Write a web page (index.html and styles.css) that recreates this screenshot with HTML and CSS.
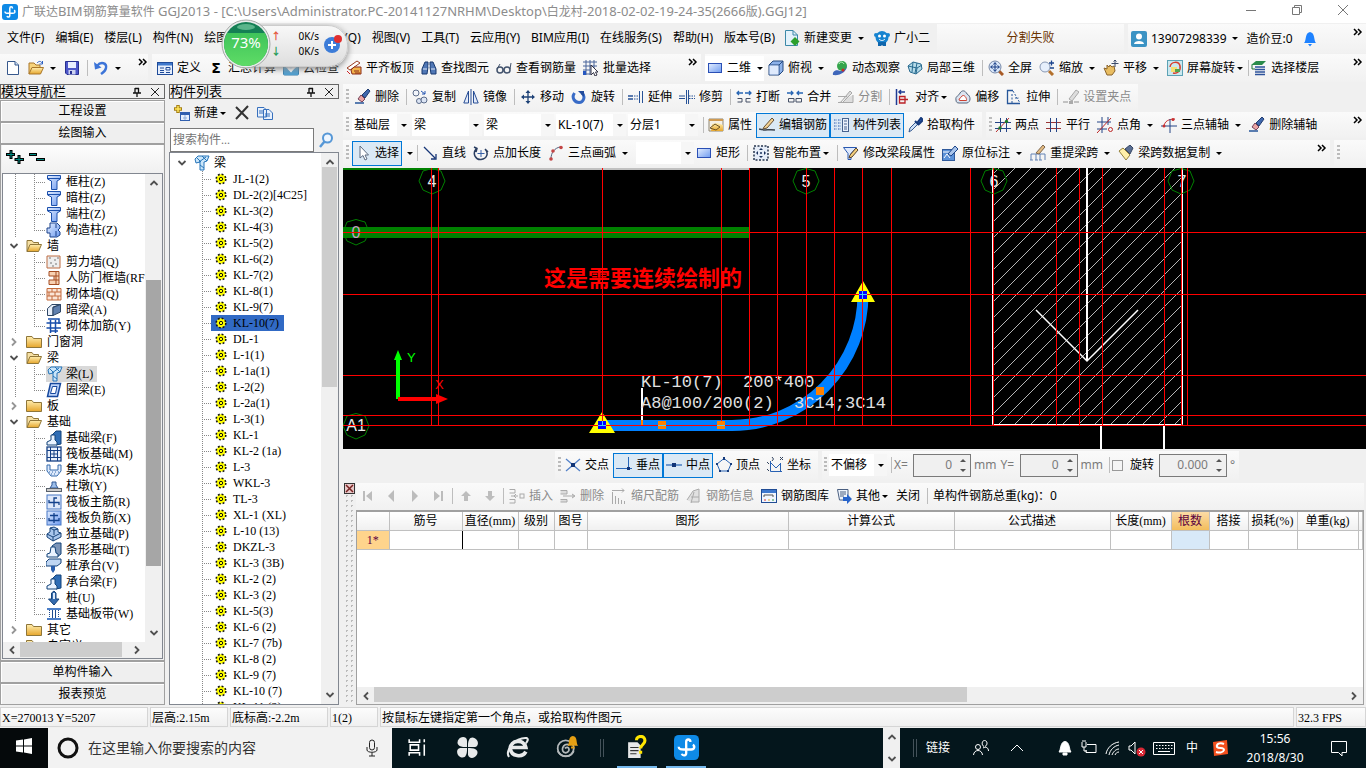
FILE: index.html
```html
<!DOCTYPE html>
<html lang="zh-CN">
<head>
<meta charset="utf-8">
<title>广联达BIM钢筋算量软件 GGJ2013</title>
<link rel="stylesheet" href="styles.css">
</head>
<body>
<svg class="defs" aria-hidden="true">
<defs>
<linearGradient id="gBlue" x1="0" y1="0" x2="1" y2="1"><stop offset="0" stop-color="#e4eeff"/><stop offset="1" stop-color="#6e9bf0"/></linearGradient>
<linearGradient id="gGold" x1="0" y1="0" x2="0" y2="1"><stop offset="0" stop-color="#ffeeb0"/><stop offset="1" stop-color="#e6a62c"/></linearGradient>
<linearGradient id="gGreen" x1="0" y1="0" x2="0" y2="1"><stop offset="0" stop-color="#3fc45a"/><stop offset="1" stop-color="#5fdc66"/></linearGradient>
</defs>
<symbol id="logo" viewBox="0 0 16 16"><rect width="16" height="16" rx="3" fill="#0e8ae6"/><path d="M10.500 4.500C10.500 2.300 7.800 2.300 7.800 4.500V11.500C7.800 13.500 5.500 13.500 5 12M3 7.500C3 9.500 5 9.300 7 9.300H11C13.300 9.300 13.500 7 12 6.300" fill="none" stroke="#fff" stroke-width="1.500"/></symbol>
<symbol id="new" viewBox="0 0 16 16"><path d="M2.500 1.500H10L13.500 5V14.500H2.500Z" fill="#fff" stroke="#37588c"/><path d="M10 1.500V5H13.500" fill="#cfe0f5" stroke="#37588c"/></symbol>
<symbol id="open" viewBox="0 0 16 16"><path d="M1 14V3H6L8 5H12V7" fill="#f6d37c" stroke="#a9772a"/><path d="M1 14L4 7.500H15.500L12.500 14Z" fill="url(#gGold)" stroke="#a9772a"/><path d="M9 3C11 .8 13 1 14 3M14.500 1V4H11.500" fill="none" stroke="#2b5fc0"/></symbol>
<symbol id="openf" viewBox="0 0 16 16"><path d="M1 13.500V2.500H6L7.500 4.500H12.500V7" fill="#f6e0a4" stroke="#8f7639"/><path d="M1 13.500L4 6.500H15.500L12.500 13.500Z" fill="url(#gGold)" stroke="#8f7639"/></symbol>
<symbol id="save" viewBox="0 0 16 16"><path d="M1.500 1.500H14.500V14.500H3L1.500 13Z" fill="#4d56c8" stroke="#272f90"/><rect x="4" y="2" width="8" height="6" fill="#e9eeff"/><rect x="4.500" y="10" width="7" height="4.500" fill="#cdd3f0"/><rect x="6" y="11" width="2" height="3" fill="#272f90"/></symbol>
<symbol id="undo" viewBox="0 0 16 16"><path d="M4 6C8 1 14 3 13 8C12.600 11 10 12.500 8 14" fill="none" stroke="#3c74d8" stroke-width="2.400"/><path d="M1 2L2 9.500L8.500 7.500Z" fill="#3c74d8"/></symbol>
<symbol id="define" viewBox="0 0 16 16"><rect x=".5" y="2.500" width="15" height="12" fill="#e6eefb" stroke="#1f4b99"/><rect x="1" y="3" width="14" height="2.500" fill="#3f78cc"/><path d="M3 8H7M3 10.500H7M3 12.500H7M9 7.500H13V10H9ZM9 12.500H13" stroke="#1f4b99" fill="none"/></symbol>
<symbol id="cloud" viewBox="0 0 16 16"><rect x=".5" y="2" width="15" height="13" rx="1" fill="#d9ecfb" stroke="#367fae"/><path d="M1 6L8 11L15 6V15H1Z" fill="#4f9fd0"/><path d="M5 8L8 11L13 5" stroke="#fff" stroke-width="2" fill="none"/></symbol>
<symbol id="align" viewBox="0 0 16 16"><path d="M1 8L11 1L14 3L4 10Z" fill="#fff" stroke="#9a3d22"/><path d="M5 10L8 7H15V14H6Z" fill="#f2b34c" stroke="#8b2a17"/><path d="M8 11H13M9 13H14" stroke="#8b2a17"/><path d="M1 11L4 14" stroke="#c22"/></symbol>
<symbol id="find" viewBox="0 0 16 16"><path d="M4 2H7V7L6 14H1V9ZM12 2H9V7L10 14H15V9Z" fill="#5077b5" stroke="#18396f"/><path d="M2 9H6M10 9H14M7 6H9" stroke="#e1ebfa"/></symbol>
<symbol id="glasses" viewBox="0 0 16 16"><circle cx="4" cy="10" r="3" fill="none" stroke="#43536d" stroke-width="1.500"/><circle cx="11" cy="10" r="3" fill="none" stroke="#43536d" stroke-width="1.500"/><path d="M7 10H8M1 9L4 4M14 9L15 3" stroke="#43536d"/></symbol>
<symbol id="batch" viewBox="0 0 16 16"><path d="M0 2H14M0 6H14M0 10H7M3 0V15M7 0V15M11 0V8M0 14H7" stroke="#48659a"/><path d="M8 5V15L10.500 12.500L12 16L14 15L12.500 12H15Z" fill="#fff" stroke="#334"/><rect x="0" y="11" width="3" height="4" fill="#2456c0"/></symbol>
<symbol id="rect" viewBox="0 0 16 16"><rect x="1.500" y="3.500" width="13" height="9" fill="url(#gBlue)" stroke="#2a4fb5"/></symbol>
<symbol id="cube" viewBox="0 0 16 16"><path d="M1 5L5 1H15V11L11 15H1Z" fill="#8db2ea" stroke="#24497e"/><path d="M1 5H11V15M11 5L15 1" fill="none" stroke="#24497e"/><rect x="1.500" y="5.500" width="9" height="9" fill="#dfeafc"/></symbol>
<symbol id="orbit" viewBox="0 0 16 16"><circle cx="10" cy="6" r="5" fill="#35a54c"/><path d="M7 4C8 1 11 2 12 4" stroke="#c8f7c9" fill="none"/><path d="M1 15C0 11 5 9 8 11C12 11 14 9 15 5C15 12 8 16 1 15Z" fill="#3e66ba"/><circle cx="11" cy="10" r="1.500" fill="#ce2727"/></symbol>
<symbol id="part3d" viewBox="0 0 16 16"><path d="M1 6L6 2L14 4L15 9L9 14L3 12Z" fill="#b6dbe9" stroke="#286a8f"/><path d="M6 2L5 12M10 3L8 13M1 6L10 8L15 5M10 8L9 14" stroke="#286a8f" fill="none"/></symbol>
<symbol id="full" viewBox="0 0 16 16"><path d="M11 11L15 15" stroke="#a85a25" stroke-width="3"/><circle cx="7" cy="7" r="6" fill="#dbe8fa" stroke="#7688a8"/><path d="M7 3V11M3 7H11M5.500 4.500L7 2.500L8.500 4.500M5.500 9.500L7 11.500L8.500 9.500M4.500 5.500L2.500 7L4.500 8.500M9.500 5.500L11.500 7L9.500 8.500" stroke="#143a83" fill="none"/></symbol>
<symbol id="zoom" viewBox="0 0 16 16"><path d="M10 11L14 15" stroke="#b3702c" stroke-width="3"/><circle cx="6" cy="7" r="5" fill="#e6effc" stroke="#8798b4"/><path d="M10 3H15M12.500 .5V5.500M11 8H15" stroke="#1b448d" stroke-width="1.300"/></symbol>
<symbol id="pan" viewBox="0 0 16 16"><path d="M1 8L4 9V5L6 7L7 5L9 7L11 6L12 11L9 15H4Z" fill="#e9bd61" stroke="#8a632a"/><path d="M12 0V7M8.500 3.500H15.500M10.500 1.500L12 0L13.500 1.500" stroke="#3a4a69" fill="none"/></symbol>
<symbol id="spin" viewBox="0 0 16 16"><rect x=".5" y=".5" width="15" height="15" fill="#cbe8ef" stroke="#5ca2b5"/><path d="M3 7C4 1 12 1 13 6C14 11 10 14 6 13" fill="none" stroke="#d93e2c" stroke-width="1.500"/><rect x="4" y="7" width="6" height="5" fill="#f7df72"/><rect x="8" y="9" width="5" height="3" fill="#53a34e"/></symbol>
<symbol id="floor" viewBox="0 0 16 16"><path d="M0 5L5 1H15L11 5Z" fill="#2a8b4b"/><path d="M4 7H14M4 9.500H14M4 12H14M4 14.500H14" stroke="#2c529b" stroke-width="1.500"/><path d="M1 5V9H4" stroke="#1d6e35" fill="none"/></symbol>
<symbol id="change" viewBox="0 0 16 16"><path d="M1.500 .5H9L13.500 5V15.500H1.500Z" fill="#e3f2fb" stroke="#3c89a8"/><path d="M11 7L15.500 11.500L11 16L6.500 11.500Z" fill="#2da02c"/><path d="M9 .5V5H13.500" fill="none" stroke="#3c89a8"/></symbol>
<symbol id="mascot" viewBox="0 0 16 16"><circle cx="8" cy="7.500" r="6.500" fill="#1784d0"/><circle cx="2" cy="5" r="2" fill="#1784d0"/><circle cx="14" cy="5" r="2" fill="#1784d0"/><path d="M4 12H12L12 16H9L8 15L7 16H4Z" fill="#0f66ac"/><circle cx="5.500" cy="6" r="1.500" fill="#fff"/><circle cx="10.500" cy="6" r="1.500" fill="#fff"/><path d="M5 9C7 11 9 11 11 9" stroke="#fff" fill="none"/></symbol>
<symbol id="user" viewBox="0 0 16 16"><rect width="16" height="16" rx="2" fill="#3b93c4"/><circle cx="8" cy="5.500" r="3" fill="#fff"/><path d="M3 13C3 9 13 9 13 13Z" fill="#fff"/></symbol>
<symbol id="bell" viewBox="0 0 16 16"><path d="M2 12C4.500 10 2.500 2 8 1C13.500 2 11.500 10 14 12ZM6 13H10L8 15.500Z" fill="#1e82ff"/></symbol>
<symbol id="erase" viewBox="0 0 16 16"><path d="M0 14H9" stroke="#26569a" stroke-width="1.500"/><path d="M3 10L6 6L10 10L7 13Z" fill="#eaa4a4" stroke="#74435a"/><path d="M7 6L13 0L15 2L10 9Z" fill="#3f68ad" stroke="#223d70"/></symbol>
<symbol id="copy" viewBox="0 0 16 16"><circle cx="4" cy="4" r="3" fill="#f2f5fb" stroke="#5c6c8a"/><circle cx="7" cy="12" r="2.500" fill="#dce5f5" stroke="#5c6c8a"/><circle cx="12" cy="11" r="3" fill="#dce5f5" stroke="#5c6c8a"/><path d="M9 2L13 5M13 2V5H10" stroke="#2455b1" fill="none"/></symbol>
<symbol id="mirror" viewBox="0 0 16 16"><path d="M5.500 2V14H.8ZM10.500 2V14H15.200Z" fill="#e3ebfa" stroke="#294e95"/><path d="M8 0V16" stroke="#294e95"/></symbol>
<symbol id="move" viewBox="0 0 16 16"><path d="M8 2V14M2 8H14" stroke="#1e4277" stroke-width="1.300"/><path d="M8 1L10.500 4H5.500ZM8 15L5.500 12H10.500ZM1 8L4 5.500V10.500ZM15 8L12 10.500V5.500Z" fill="#1e4277"/></symbol>
<symbol id="rotate" viewBox="0 0 16 16"><path d="M3.500 4C0 9 4 13.500 8 13.500C13 13.500 14.500 7 11 4" fill="none" stroke="#386bc7" stroke-width="3"/><path d="M7 2H13V8Z" fill="#234c9c"/></symbol>
<symbol id="extend" viewBox="0 0 16 16"><path d="M0 7H5M0 10H5" stroke="#275297" stroke-width="1.500"/><path d="M6 7H11M6 10H11" stroke="#275297" stroke-dasharray="1.500 1"/><path d="M11.500 2V14M14.500 2V14" stroke="#275297"/></symbol>
<symbol id="trim" viewBox="0 0 16 16"><path d="M0 7H6M0 9.500H6M7.500 1V15M9.500 1V15" stroke="#275297"/><path d="M10 7H16M10 9.500H16" stroke="#275297" stroke-dasharray="1.500 1"/></symbol>
<symbol id="break" viewBox="0 0 16 16"><path d="M1 4H7M3 2L1 4L3 6M9 4H15M13 2L15 4L13 6" stroke="#2765b4" fill="none" stroke-width="1.300"/><path d="M1.500 9.500H6V13H1.500M14.500 9.500H10V13H14.500" stroke="#444f65" fill="none"/></symbol>
<symbol id="join" viewBox="0 0 16 16"><path d="M0 4H6M4 2L6 4L4 6M16 4H10M12 2L10 4L12 6" stroke="#2765b4" fill="none" stroke-width="1.300"/><path d="M1.500 9.500H7V13H1.500ZM14.500 9.500H9V13H14.500Z" stroke="#444f65" fill="none"/></symbol>
<symbol id="split" viewBox="0 0 16 16"><path d="M0 7.500H9M0 13.500H15V6M3 13L12 2L14 4L5 13" stroke="#a9a9a9" fill="#ddd"/></symbol>
<symbol id="alignto" viewBox="0 0 16 16"><path d="M1.500 0V16" stroke="#1d3a94" stroke-width="1.500"/><path d="M4 3H10M6 1L4 3L6 5" stroke="#1d3a94" fill="none" stroke-width="1.500"/><path d="M4.500 7.500H10V14H4.500ZM4 10.500H13" stroke="#bb2026" fill="none" stroke-width="1.300"/></symbol>
<symbol id="offset" viewBox="0 0 16 16"><path d="M1 11C0 7 4 7 5 4C7 1 10 1 12 5C16 7 16 13 12 14H4C2 14 1 13 1 11Z" fill="#dce4f0" stroke="#55677f"/><path d="M4 11C4 9 6 9 7 7C9 5 12 9 11.500 11.500H5Z" fill="#fff" stroke="#cc4030"/></symbol>
<symbol id="stretch" viewBox="0 0 16 16"><path d="M7 1.500H1.500V14.500H14" fill="none" stroke="#26569a" stroke-width="1.300"/><path d="M7 2L14 14M6 5V14M9 9H13" stroke="#26569a" stroke-dasharray="2 1.500"/></symbol>
<symbol id="grip" viewBox="0 0 16 16"><path d="M0 13H5M11 13H16" stroke="#b1b1b1" stroke-width="1.500"/><path d="M6 10L13 1L16 3L9 12Z" fill="#ddd" stroke="#a8a8a8"/><rect x="6" y="12" width="4" height="3" fill="#aaa"/></symbol>
<symbol id="props" viewBox="0 0 16 16"><path d="M1 2H15V14H1Z" fill="#f5f0e6" stroke="#8f8672"/><path d="M1 2H15V4H1Z" fill="#cf9a52"/><path d="M4 7L9 6L15 8V14H3Z" fill="url(#gGold)"/><path d="M2 11L7 7L12 10L8 13Z" fill="none" stroke="#6d5327"/></symbol>
<symbol id="pencil" viewBox="0 0 16 16"><path d="M0 12C5 14 10 12 16 13" stroke="#3b434e" fill="none" stroke-width="1.500"/><path d="M5 10L13 1L15 3L8 11L4 12Z" fill="#f1d194" stroke="#665035"/></symbol>
<symbol id="list" viewBox="0 0 16 16"><path d="M1 3H4M1 6H4M1 9H4M1 12H4M5 3H8M5 6H8M5 9H8M5 12H8" stroke="#295aae" stroke-dasharray="1.500 1"/><rect x="9.500" y="1.500" width="6" height="13" fill="#eaf1fc" stroke="#46638f"/><path d="M11 4H14M11 7H14M11 10H14M11 12H14" stroke="#46638f"/></symbol>
<symbol id="pick" viewBox="0 0 16 16"><path d="M2 15L3 11L9 5L11 7L5 13Z" fill="#cfe1f8" stroke="#355990"/><path d="M8 4L12 8M10 6L14 1L16 3L12 7Z" stroke="#173b7d" stroke-width="2" fill="#2c5fb8"/></symbol>
<symbol id="twopt" viewBox="0 0 16 16"><path d="M0 5.500H16M0 11.500H16M5.500 1V15M11.500 1V15" stroke="#244486"/><path d="M1 15L14 1" stroke="#b83030"/><circle cx="5" cy="11" r="1.700" fill="#1d7a2a"/><circle cx="11.500" cy="4.500" r="1.700" fill="#1d7a2a"/></symbol>
<symbol id="parallel" viewBox="0 0 16 16"><path d="M0 5.500H15M0 11.500H15" stroke="#993535"/><path d="M4.500 1V15M10.500 1V15" stroke="#244486"/></symbol>
<symbol id="ptangle" viewBox="0 0 16 16"><path d="M0 5H14M0 12H10M5 0V16M11 0V8" stroke="#244486"/><path d="M0 16L14 1" stroke="#bd2727"/><circle cx="13.500" cy="12.500" r="2" fill="none" stroke="#bd2727"/></symbol>
<symbol id="axis3" viewBox="0 0 16 16"><path d="M3 10C3 4 8 2 14 2" stroke="#c83131" fill="none"/><path d="M0 9H16M9 2V16" stroke="#244486"/><circle cx="3" cy="9" r="1.500" fill="#c83131"/><circle cx="12" cy="2.500" r="1.500" fill="#c83131"/></symbol>
<symbol id="cursor" viewBox="0 0 16 16"><path d="M5 1V13L8 10.500L10 15L12 14L10 10H13.500Z" fill="#fff" stroke="#5d6b80"/></symbol>
<symbol id="line" viewBox="0 0 16 16"><path d="M2 2L13 13M14 9V14H9" stroke="#173677" stroke-width="1.300" fill="none"/></symbol>
<symbol id="ptlen" viewBox="0 0 16 16"><path d="M3 4C-1 9 3 15 8 14.500C14 14 16 8 12 4M1 2L4 3.500L3 7M15 7L12 4" fill="none" stroke="#2a3e61" stroke-width="1.500"/><path d="M8 5V12M4.500 8.500H11.500" stroke="#355fa7"/></symbol>
<symbol id="arc" viewBox="0 0 16 16"><path d="M3 14C3 7 7 3 12 2" stroke="#50607b" fill="none"/><circle cx="3" cy="14" r="1.800" fill="#c34545"/><circle cx="5" cy="6" r="1.800" fill="#c34545"/><circle cx="13" cy="2.500" r="1.800" fill="#c34545"/></symbol>
<symbol id="smart" viewBox="0 0 16 16"><rect x="1" y="1" width="14" height="14" fill="#e6edf8" stroke="#26354e" stroke-width="1.500" stroke-dasharray="2 1.500"/><path d="M8 3L10 5H6ZM8 13L6 11H10ZM3 8L5 6V10ZM13 8L11 10V6Z" fill="#1a315c"/><circle cx="8" cy="8" r="1" fill="#1a315c"/></symbol>
<symbol id="beamedit" viewBox="0 0 16 16"><path d="M.5 2.500H13.500L8 8.500V14.500H5V8.500Z" fill="#dfeafd" stroke="#2858b0"/><path d="M7 10L13 3L15 5L9 12L6 13Z" fill="#f3cf7d" stroke="#59442c"/></symbol>
<symbol id="mark" viewBox="0 0 16 16"><rect x=".5" y="4.500" width="12" height="11" fill="#5c92d8" stroke="#305a9b"/><path d="M2 13L5 9L8 13M1 7H9" stroke="#fff" fill="none"/><path d="M6 9L13 1L16 4L9 11Z" fill="#a8c4ea" stroke="#1a4389"/></symbol>
<symbol id="respan" viewBox="0 0 16 16"><path d="M1 15V9H15V15M6 9V15M10 9V15M0 15H3M5 15H8M9 15H12" stroke="#6382b4" fill="none"/><path d="M6 8L13 0L15 2L9 9Z" fill="#e3bb82" stroke="#7c654c"/></symbol>
<symbol id="brush" viewBox="0 0 16 16"><path d="M1 6L5 3L12 10L8 15Z" fill="#fff0aa" stroke="#94823f"/><path d="M7 4L12 0L15 3L12 9Z" fill="#5b6f93" stroke="#354563"/></symbol>
<symbol id="sx" viewBox="0 0 16 16"><path d="M1 2L15 14M15 2L1 14" stroke="#5482c8" stroke-width="1.300"/><rect x="6" y="6" width="4" height="4" fill="#123578"/></symbol>
<symbol id="perp" viewBox="0 0 16 16"><path d="M0 11.500H16M12.500 0V12" stroke="#2867b9"/><rect x="11" y="10" width="3" height="3" fill="#123578"/></symbol>
<symbol id="mid" viewBox="0 0 16 16"><path d="M0 8H16" stroke="#6c97cd" stroke-width="2"/><rect x="6" y="6" width="4" height="4" fill="#123578"/></symbol>
<symbol id="penta" viewBox="0 0 16 16"><path d="M8 1.500L15 7L12 14H4L1 7Z" fill="none" stroke="#2b65b4"/><path d="M7 0H9V3H7ZM0 6H2V8H0ZM14 6H16V8H14ZM3 13H5V15H3ZM11 13H13V15H11Z" fill="#173c7c"/></symbol>
<symbol id="coord" viewBox="0 0 16 16"><path d="M3.500 4V14.500H15M4 6L9 11L14 6M13.500 6V14" stroke="#2861b3" fill="none"/><path d="M5 0L6.500 2L5 4M13 0L16 3M16 0L13 3M0 5L2 7M0 12L2 14" stroke="#33445f" fill="none"/></symbol>
<symbol id="first" viewBox="0 0 16 16"><path d="M4 3H6V13H4ZM13 3V13L7 8Z" fill="#bcbcbc"/></symbol>
<symbol id="prev" viewBox="0 0 16 16"><path d="M11 2V14L5 8Z" fill="#bcbcbc"/></symbol>
<symbol id="next" viewBox="0 0 16 16"><path d="M5 2V14L11 8Z" fill="#bcbcbc"/></symbol>
<symbol id="last" viewBox="0 0 16 16"><path d="M12 3H10V13H12ZM3 3V13L9 8Z" fill="#bcbcbc"/></symbol>
<symbol id="up" viewBox="0 0 16 16"><path d="M8 3L13 8H10V13H6V8H3Z" fill="#bdbdbd"/></symbol>
<symbol id="down" viewBox="0 0 16 16"><path d="M8 13L13 8H10V3H6V8H3Z" fill="#bdbdbd"/></symbol>
<symbol id="insrow" viewBox="0 0 16 16"><path d="M.5 1.500H6V5H.5M.5 11.500H6V15H.5M2 8H9M7 6L5 8L7 10" fill="none" stroke="#aaa"/><rect x="11" y="6" width="4" height="4" fill="none" stroke="#aaa"/></symbol>
<symbol id="delrow" viewBox="0 0 16 16"><path d="M.5 2.500H7V6H.5M.5 11.500H7V14H.5M3 8H14M12 6L15 8L12 10" fill="#ddd" stroke="#aaa"/></symbol>
<symbol id="scalebar" viewBox="0 0 16 16"><path d="M1 2.500H13M11 .5L13 2.500L11 4.500M1.500 4V16M4.500 8V16M7.500 10V16M10.500 12V16M13.500 13V16" stroke="#aaa" fill="none"/></symbol>
<symbol id="info" viewBox="0 0 16 16"><path d="M1 12L7 3L13 1V14H5M5 9H13M8 4L5 15" stroke="#aaa" fill="#e1e1e1"/></symbol>
<symbol id="gallery" viewBox="0 0 16 16"><rect x=".5" y="1.500" width="15" height="13" fill="#f1f6ff" stroke="#204c94"/><rect x="1" y="2" width="14" height="3" fill="#3d78cf"/><path d="M3 9V7H12V9" fill="none" stroke="#555"/><path d="M3 12H5" stroke="#d33"/><path d="M7 12H9" stroke="#e8a81c"/><path d="M11 12H13" stroke="#289b3c"/></symbol>
<symbol id="other" viewBox="0 0 16 16"><path d="M1.500 1.500H12V12H3.500ZM4 4H10M4 6H10M4 8H8" fill="#edf3fc" stroke="#4a5f80"/><path d="M7 9H11V6L16 11L11 16V13H7Z" fill="#2663cb"/></symbol>
<symbol id="addcomp" viewBox="0 0 16 16"><rect x="6.500" y="7.500" width="9" height="8" fill="#e8f0fc" stroke="#315fae"/><path d="M7 9H15" stroke="#315fae" stroke-width="2"/><path d="M9 13H13M11 10V15" stroke="#8cadd9"/><path d="M4 0V8M0 4H8" stroke="#a68014" stroke-width="3.500"/><path d="M4 1V7M1 4H7" stroke="#ffe65b" stroke-width="1.500"/></symbol>
<symbol id="cross" viewBox="0 0 16 16"><path d="M2 2L14 14M14 1L2 14" stroke="#333" stroke-width="2"/></symbol>
<symbol id="pages" viewBox="0 0 16 16"><path d="M.5 2.500H7L9.500 5V12H.5ZM6.500 4.500H12L15.500 8V14.500H6.500Z" fill="#e7f0fc" stroke="#3770bd"/><path d="M2 6H6M2 8H6M8 9H13M8 11H13" stroke="#3770bd"/></symbol>
<symbol id="search" viewBox="0 0 16 16"><circle cx="9.500" cy="6" r="4.500" fill="#eef6ff" stroke="#5697d6" stroke-width="2"/><path d="M6.500 9.500L2 15" stroke="#5697d6" stroke-width="2.500"/></symbol>
<symbol id="folder" viewBox="0 0 16 16"><path d="M.5 13.500V2.500H6L7.500 4.500H15.500V13.500Z" fill="url(#gGold)" stroke="#8f7639"/></symbol>
<symbol id="col" viewBox="0 0 16 16"><path d="M1.500 1.500H14.500V5L11 7V15.500H5.500V7L1.500 5Z" fill="url(#gBlue)" stroke="#1c50ac"/><path d="M2 4.500H14" stroke="#1c50ac"/></symbol>
<symbol id="colc" viewBox="0 0 16 16"><path d="M4 1H11L14 4V6L12 8L14 10V13L11 15H4V11H1V6H4Z" fill="url(#gBlue)" stroke="#1c438a"/><path d="M10 2V6M10 9V14" stroke="#1c438a"/></symbol>
<symbol id="wall" viewBox="0 0 16 16"><path d="M1 2H14V14H1Z" fill="#eee" stroke="#bd6d42"/><path d="M3 4H5M8 6H10M4 9H6M9 10H11M6 12H8M11 4H13" stroke="#777"/></symbol>
<symbol id="door" viewBox="0 0 16 16"><path d="M3 1.500H13V14.500H3V10H8V6H3Z" fill="#f8d1b2" stroke="#a44d23"/><path d="M10 1V14M8 6H13M8 10H13" stroke="#a44d23"/></symbol>
<symbol id="brick" viewBox="0 0 16 16"><path d="M1 2.500H15V14H1Z" fill="#fbe5d7" stroke="#c36b3c"/><path d="M1 6H15M1 10H15M6 2V6M11 2V6M3 6V10M9 6V10M6 10V14M12 10V14" stroke="#c36b3c"/></symbol>
<symbol id="hbeam" viewBox="0 0 16 16"><path d="M1.500 6.500L6 2.500H14.500L7 5V13.500H1.500Z" fill="#e8effa" stroke="#2c4565"/><path d="M7 5.500L14.500 2.500V10L7 13.500Z" fill="#5f7fae" stroke="#2c4565"/></symbol>
<symbol id="rebar" viewBox="0 0 16 16"><path d="M.5 5H15M.5 10H15M4.500 2V15M9.500 2V15M2 1H13V6M4 13H12" fill="none" stroke="#174dab" stroke-width="1.500"/></symbol>
<symbol id="beam" viewBox="0 0 16 16"><path d="M1 4L4 1H15L13 6L10 7V15H6V7L2 8Z" fill="#cbe6fa" stroke="#2675b9"/><path d="M3 3L7 7M8 1L13 6M5 7L12 2M6 10L10 13" stroke="#2675b9"/></symbol>
<symbol id="ring" viewBox="0 0 16 16"><path d="M4.500 1.500H14.500L11.500 14.500H1.500Z" fill="#bdd4fa" stroke="#16489d" stroke-width="1.500"/><path d="M6.500 4.500H11L9.500 11.500H4.500Z" fill="#fff" stroke="#16489d"/></symbol>
<symbol id="fbeam" viewBox="0 0 16 16"><path d="M5 6L10 1H15V14L10 15Z" fill="#2f6db5" stroke="#134378"/><path d="M1 15V12L5 10V5H9V10L11 12V15Z" fill="#eaf3ff" stroke="#134378"/></symbol>
<symbol id="stripf" viewBox="0 0 16 16"><path d="M6 4L10 1H15V12L11 15Z" fill="#7c95b8" stroke="#134378"/><path d="M1 15V12L4 11L5 5H9L10 11L12 12V15Z" fill="#eaf3ff" stroke="#134378"/></symbol>
<symbol id="raft" viewBox="0 0 16 16"><rect x="1" y="1" width="14" height="14" fill="#eaf1fc" stroke="#154085" stroke-width="1.300"/><path d="M1 4.500H15M1 11.500H15M4.500 1V15M11.500 1V15M4 8H12M8 4V12" stroke="#154085"/></symbol>
<symbol id="pit" viewBox="0 0 16 16"><path d="M1 3H4V8H12V3H15V9L11 14H5L1 9Z" fill="#deeafc" stroke="#346aac"/><path d="M3 10H13M5 12H11" stroke="#346aac" stroke-dasharray="1 2"/></symbol>
<symbol id="pier" viewBox="0 0 16 16"><path d="M4 10L6 7V4H10V7L12 10Z" fill="#9cbeea" stroke="#315894"/><rect x=".5" y="10.500" width="15" height="3" fill="#ccc" stroke="#59616b"/></symbol>
<symbol id="mainbar" viewBox="0 0 16 16"><rect x="1" y="1" width="14" height="14" fill="#dfe9fb" stroke="#4677c4"/><path d="M3 6V8.500H13V11M8 13V4H11" stroke="#12418c" fill="none" stroke-width="1.300"/></symbol>
<symbol id="negbar" viewBox="0 0 16 16"><rect x="1" y="1" width="14" height="14" fill="url(#gBlue)" stroke="#4677c4"/><path d="M8 3V13M4 5.500H12M3 8V10.500H13V8" stroke="#12418c" fill="none" stroke-width="1.300"/></symbol>
<symbol id="found" viewBox="0 0 16 16"><path d="M1 8L4 6V2L8 1L12 3V6L15 7V11L7 15L1 11Z" fill="#a9c7ed" stroke="#174379"/><path d="M1 8L7 11L15 7M7 11V15M4 2L8 4L12 3M8 4V9" stroke="#174379" fill="none"/></symbol>
<symbol id="pile" viewBox="0 0 16 16"><path d="M0 4L3 1H15V5L11 8H0Z" fill="#bfd6f3" stroke="#174379"/><path d="M5 8H9V12L7 15L5 12Z" fill="#2a5fae"/></symbol>
<symbol id="pile2" viewBox="0 0 16 16"><path d="M5.500 3L8 1L10 3V9H13L8 15L2.500 9H5.500Z" fill="#356bae" stroke="#174379"/><path d="M7 3H9V9H7Z" fill="#deebfa"/></symbol>
<symbol id="strip" viewBox="0 0 16 16"><path d="M1 3H15M1 13H15" stroke="#4c7fc8" stroke-width="2"/><path d="M3.500 4V12M12.500 4V12" stroke="#204d90" stroke-dasharray="1 1"/><path d="M6.500 4V12M9.500 4V12" stroke="#204d90"/></symbol>
<symbol id="gear" viewBox="0 0 12 12"><circle cx="6" cy="6" r="4" fill="#ff0" stroke="#ff0" stroke-width="1.500"/><circle cx="6" cy="6" r="4.800" fill="none" stroke="#111" stroke-width="1.600" stroke-dasharray="1.900 1.870"/><circle cx="6" cy="6" r="1.700" fill="#ff0" stroke="#111"/></symbol>
<symbol id="pin" viewBox="0 0 10 10"><path d="M3 1V6M6.500 1V6M3 1.500H7M1 6H9M5 6V10" stroke="#111" fill="none" stroke-width="1.300"/></symbol>
<symbol id="close" viewBox="0 0 10 10"><path d="M1 1L9 9M9 1L1 9" stroke="#222" fill="none"/></symbol>
<symbol id="aup" viewBox="0 0 10 10"><path d="M1.500 7L5 3.500L8.500 7" fill="none" stroke="#505050" stroke-width="1.800"/></symbol>
<symbol id="adown" viewBox="0 0 10 10"><path d="M1.500 3L5 6.500L8.500 3" fill="none" stroke="#505050" stroke-width="1.800"/></symbol>
<symbol id="aleft" viewBox="0 0 10 10"><path d="M7 1.500L3.500 5L7 8.500" fill="none" stroke="#505050" stroke-width="1.800"/></symbol>
<symbol id="aright" viewBox="0 0 10 10"><path d="M3 1.500L6.500 5L3 8.500" fill="none" stroke="#505050" stroke-width="1.800"/></symbol>
<symbol id="more" viewBox="0 0 10 10"><path d="M1 2L4 5L1 8M5 2L8 5L5 8" fill="none" stroke="#000" stroke-width="1.500"/></symbol>
</svg>

<header class="titlebar">
  <svg class="ic"><use href="#logo"/></svg>
  <h1><span>广联达</span>BIM<span>钢筋算量软件</span> GGJ2013 - [C:\Users\Administrator.PC-20141127NRHM\Desktop\<span>白龙村</span>-2018-02-02-19-24-35(2666<span>版</span>).GGJ12]</h1>
  <div class="winbtns">
    <button aria-label="最小化"><svg viewBox="0 0 12 12"><path d="M1 6.500H11" stroke="#777"/></svg></button>
    <button aria-label="还原"><svg viewBox="0 0 12 12"><path d="M1.500 3.500H8.500V10.500H1.500ZM3.500 3V1.500H10.500V8.500H9" fill="none" stroke="#777"/></svg></button>
    <button aria-label="关闭"><svg viewBox="0 0 12 12"><path d="M1 1L11 11M11 1L1 11" stroke="#777"/></svg></button>
  </div>
</header>

<div class="menubar">
  <nav class="menus">
    <button>文件(F)</button><button>编辑(E)</button><button>楼层(L)</button><button>构件(N)</button><button>绘图(D)</button><button>修改(M)</button><button>钢筋量(Q)</button><button>视图(V)</button><button>工具(T)</button><button>云应用(Y)</button><button>BIM应用(I)</button><button>在线服务(S)</button><button>帮助(H)</button><button>版本号(B)</button>
    <button class="tool"><svg class="ic"><use href="#change"/></svg>新建变更<i class="caret"></i></button>
    <button class="tool"><svg class="ic"><use href="#mascot"/></svg>广小二</button>
  </nav>
  <div class="strip notice">分割失败</div>
  <div class="strip account">
    <button class="tool"><svg class="ic"><use href="#user"/></svg>13907298339<i class="caret"></i></button>
    <button class="tool">造价豆:0</button>
    <button class="tool bell" aria-label="通知"><svg class="ic"><use href="#bell"/></svg></button>
    <svg class="more"><use href="#more"/></svg>
  </div>
</div>

<div class="mainbar">
  <div class="strip files">
    <button class="tool" aria-label="新建"><svg class="ic"><use href="#new"/></svg></button>
    <button class="tool" aria-label="打开"><svg class="ic"><use href="#open"/></svg><i class="caret"></i></button>
    <button class="tool" aria-label="保存"><svg class="ic"><use href="#save"/></svg></button>
    <i class="sep"></i>
    <button class="tool" aria-label="撤销"><svg class="ic"><use href="#undo"/></svg><i class="caret"></i></button>
    <svg class="more"><use href="#more"/></svg>
  </div>
  <div class="strip">
    <button class="tool"><svg class="ic"><use href="#define"/></svg>定义</button>
    <button class="tool"><b class="sigma">Σ</b>汇总计算</button>
    <button class="tool"><svg class="ic"><use href="#cloud"/></svg>云检查</button>
    <button class="tool"><svg class="ic"><use href="#align"/></svg>平齐板顶</button>
    <button class="tool"><svg class="ic"><use href="#find"/></svg>查找图元</button>
    <button class="tool"><svg class="ic"><use href="#glasses"/></svg>查看钢筋量</button>
    <button class="tool"><svg class="ic"><use href="#batch"/></svg>批量选择</button>
    <svg class="more"><use href="#more"/></svg>
  </div>
  <div class="strip view">
    <button class="tool dim2"><svg class="ic"><use href="#rect"/></svg>二维<i class="caret"></i></button>
    <button class="tool"><svg class="ic"><use href="#cube"/></svg>俯视<i class="caret"></i></button>
    <button class="tool"><svg class="ic"><use href="#orbit"/></svg>动态观察</button>
    <button class="tool"><svg class="ic"><use href="#part3d"/></svg>局部三维</button>
    <i class="sep"></i>
    <button class="tool"><svg class="ic"><use href="#full"/></svg>全屏</button>
    <button class="tool"><svg class="ic"><use href="#zoom"/></svg>缩放<i class="caret"></i></button>
    <button class="tool"><svg class="ic"><use href="#pan"/></svg>平移<i class="caret"></i></button>
    <button class="tool"><svg class="ic"><use href="#spin"/></svg>屏幕旋转<i class="caret tight"></i></button>
    <i class="sep lone"></i>
    <button class="tool"><svg class="ic"><use href="#floor"/></svg>选择楼层</button>
    <svg class="more"><use href="#more"/></svg>
  </div>
</div>

<div class="workspace">
  <aside class="panel modules">
    <h2 class="panel-head"><span>模块导航栏</span><svg class="sm"><use href="#pin"/></svg><svg class="sm"><use href="#close"/></svg></h2>
    <button class="section-btn">工程设置</button>
    <button class="section-btn">绘图输入</button>
    <div class="module-box">
      <div class="expanders">
        <button aria-label="全部展开"><svg viewBox="0 0 18 14"><path d="M5 0V9M0 4.500H9M13 5V14M8.500 9.500H18" stroke="#000" stroke-width="3"/><path d="M5 1V8M1 4.500H8M13 6V13M9.500 9.500H17" stroke="#008c82"/></svg></button>
        <button aria-label="全部折叠"><svg viewBox="0 0 18 14"><path d="M1 4.500H9M8 9.500H17" stroke="#000" stroke-width="3"/><path d="M2 4.500H8M9 9.500H16" stroke="#008c82"/></svg></button>
      </div>
      <div class="scroller">
        <ul class="tree">
          <li class="leaf"><svg class="ic"><use href="#col"/></svg><span>框柱(Z)</span></li>
          <li class="leaf"><svg class="ic"><use href="#col"/></svg><span>暗柱(Z)</span></li>
          <li class="leaf"><svg class="ic"><use href="#col"/></svg><span>端柱(Z)</span></li>
          <li class="leaf end"><svg class="ic"><use href="#colc"/></svg><span>构造柱(Z)</span></li>
          <li class="node"><svg class="sm"><use href="#adown"/></svg><svg class="ic"><use href="#openf"/></svg><span>墙</span></li>
          <li class="leaf"><svg class="ic"><use href="#wall"/></svg><span>剪力墙(Q)</span></li>
          <li class="leaf"><svg class="ic"><use href="#door"/></svg><span>人防门框墙(RF</span></li>
          <li class="leaf"><svg class="ic"><use href="#brick"/></svg><span>砌体墙(Q)</span></li>
          <li class="leaf"><svg class="ic"><use href="#hbeam"/></svg><span>暗梁(A)</span></li>
          <li class="leaf end"><svg class="ic"><use href="#rebar"/></svg><span>砌体加筋(Y)</span></li>
          <li class="node shut"><svg class="sm"><use href="#aright"/></svg><svg class="ic"><use href="#folder"/></svg><span>门窗洞</span></li>
          <li class="node"><svg class="sm"><use href="#adown"/></svg><svg class="ic"><use href="#openf"/></svg><span>梁</span></li>
          <li class="leaf current"><svg class="ic"><use href="#beam"/></svg><span>梁(L)</span></li>
          <li class="leaf end"><svg class="ic"><use href="#ring"/></svg><span>圈梁(E)</span></li>
          <li class="node shut"><svg class="sm"><use href="#aright"/></svg><svg class="ic"><use href="#folder"/></svg><span>板</span></li>
          <li class="node"><svg class="sm"><use href="#adown"/></svg><svg class="ic"><use href="#openf"/></svg><span>基础</span></li>
          <li class="leaf"><svg class="ic"><use href="#fbeam"/></svg><span>基础梁(F)</span></li>
          <li class="leaf"><svg class="ic"><use href="#raft"/></svg><span>筏板基础(M)</span></li>
          <li class="leaf"><svg class="ic"><use href="#pit"/></svg><span>集水坑(K)</span></li>
          <li class="leaf"><svg class="ic"><use href="#pier"/></svg><span>柱墩(Y)</span></li>
          <li class="leaf"><svg class="ic"><use href="#mainbar"/></svg><span>筏板主筋(R)</span></li>
          <li class="leaf"><svg class="ic"><use href="#negbar"/></svg><span>筏板负筋(X)</span></li>
          <li class="leaf"><svg class="ic"><use href="#found"/></svg><span>独立基础(P)</span></li>
          <li class="leaf"><svg class="ic"><use href="#stripf"/></svg><span>条形基础(T)</span></li>
          <li class="leaf"><svg class="ic"><use href="#pile"/></svg><span>桩承台(V)</span></li>
          <li class="leaf"><svg class="ic"><use href="#fbeam"/></svg><span>承台梁(F)</span></li>
          <li class="leaf"><svg class="ic"><use href="#pile2"/></svg><span>桩(U)</span></li>
          <li class="leaf end"><svg class="ic"><use href="#strip"/></svg><span>基础板带(W)</span></li>
          <li class="node shut"><svg class="sm"><use href="#aright"/></svg><svg class="ic"><use href="#folder"/></svg><span>其它</span></li>
          <li class="node shut"><svg class="sm"></svg><svg class="ic"><use href="#folder"/></svg><span>自定义</span></li>
        </ul>
        <div class="vbar"><svg class="sm"><use href="#aup"/></svg><div class="track"><div class="thumb module-thumb"></div></div><svg class="sm"><use href="#adown"/></svg></div>
      </div>
      <div class="hbar module-hbar"><svg class="sm"><use href="#aleft"/></svg><div class="track"><div class="thumb"></div></div><svg class="sm"><use href="#aright"/></svg></div>
    </div>
    <button class="section-btn">单构件输入</button>
    <button class="section-btn">报表预览</button>
  </aside>

  <aside class="panel components">
    <h2 class="panel-head"><span>构件列表</span><svg class="sm"><use href="#pin"/></svg><svg class="sm"><use href="#close"/></svg></h2>
    <div class="comp-tools">
      <button class="tool"><svg class="ic"><use href="#addcomp"/></svg>新建<i class="caret tight"></i></button>
      <button class="tool" aria-label="删除"><svg class="ic"><use href="#cross"/></svg></button>
      <button class="tool" aria-label="复制"><svg class="ic"><use href="#pages"/></svg></button>
    </div>
    <div class="comp-search"><input type="text" placeholder="搜索构件..." aria-label="搜索构件"><button aria-label="搜索"><svg class="ic"><use href="#search"/></svg></button></div>
    <div class="comp-box">
      <ul class="comp-tree">
        <li class="root"><svg class="sm"><use href="#adown"/></svg><svg class="ic"><use href="#beam"/></svg><span>梁</span></li>
        <li><svg class="gear"><use href="#gear"/></svg><span>JL-1(2)</span></li>
        <li><svg class="gear"><use href="#gear"/></svg><span>DL-2(2)[4C25]</span></li>
        <li><svg class="gear"><use href="#gear"/></svg><span>KL-3(2)</span></li>
        <li><svg class="gear"><use href="#gear"/></svg><span>KL-4(3)</span></li>
        <li><svg class="gear"><use href="#gear"/></svg><span>KL-5(2)</span></li>
        <li><svg class="gear"><use href="#gear"/></svg><span>KL-6(2)</span></li>
        <li><svg class="gear"><use href="#gear"/></svg><span>KL-7(2)</span></li>
        <li><svg class="gear"><use href="#gear"/></svg><span>KL-8(1)</span></li>
        <li><svg class="gear"><use href="#gear"/></svg><span>KL-9(7)</span></li>
        <li class="picked"><svg class="gear"><use href="#gear"/></svg><span>KL-10(7)</span></li>
        <li><svg class="gear"><use href="#gear"/></svg><span>DL-1</span></li>
        <li><svg class="gear"><use href="#gear"/></svg><span>L-1(1)</span></li>
        <li><svg class="gear"><use href="#gear"/></svg><span>L-1a(1)</span></li>
        <li><svg class="gear"><use href="#gear"/></svg><span>L-2(2)</span></li>
        <li><svg class="gear"><use href="#gear"/></svg><span>L-2a(1)</span></li>
        <li><svg class="gear"><use href="#gear"/></svg><span>L-3(1)</span></li>
        <li><svg class="gear"><use href="#gear"/></svg><span>KL-1</span></li>
        <li><svg class="gear"><use href="#gear"/></svg><span>KL-2 (1a)</span></li>
        <li><svg class="gear"><use href="#gear"/></svg><span>L-3</span></li>
        <li><svg class="gear"><use href="#gear"/></svg><span>WKL-3</span></li>
        <li><svg class="gear"><use href="#gear"/></svg><span>TL-3</span></li>
        <li><svg class="gear"><use href="#gear"/></svg><span>XL-1 (XL)</span></li>
        <li><svg class="gear"><use href="#gear"/></svg><span>L-10 (13)</span></li>
        <li><svg class="gear"><use href="#gear"/></svg><span>DKZL-3</span></li>
        <li><svg class="gear"><use href="#gear"/></svg><span>KL-3 (3B)</span></li>
        <li><svg class="gear"><use href="#gear"/></svg><span>KL-2 (2)</span></li>
        <li><svg class="gear"><use href="#gear"/></svg><span>KL-3 (2)</span></li>
        <li><svg class="gear"><use href="#gear"/></svg><span>KL-5(3)</span></li>
        <li><svg class="gear"><use href="#gear"/></svg><span>KL-6 (2)</span></li>
        <li><svg class="gear"><use href="#gear"/></svg><span>KL-7 (7b)</span></li>
        <li><svg class="gear"><use href="#gear"/></svg><span>KL-8 (2)</span></li>
        <li><svg class="gear"><use href="#gear"/></svg><span>KL-9 (7)</span></li>
        <li><svg class="gear"><use href="#gear"/></svg><span>KL-10 (7)</span></li>
        <li><svg class="gear"><use href="#gear"/></svg><span>KL-11 (2)</span></li>
      </ul>
      <div class="vbar"><svg class="sm"><use href="#aup"/></svg><div class="track"><div class="thumb comp-thumb"></div></div><svg class="sm"><use href="#adown"/></svg></div>
    </div>
  </aside>

  <main class="drawing">
    <div class="toolrow">
      <div class="strip fit">
        <i class="grip"></i>
        <button class="tool"><svg class="ic"><use href="#erase"/></svg>删除</button><i class="sep"></i>
        <button class="tool"><svg class="ic"><use href="#copy"/></svg>复制</button>
        <button class="tool"><svg class="ic"><use href="#mirror"/></svg>镜像</button><i class="sep"></i>
        <button class="tool"><svg class="ic"><use href="#move"/></svg>移动</button>
        <button class="tool"><svg class="ic"><use href="#rotate"/></svg>旋转</button><i class="sep"></i>
        <button class="tool"><svg class="ic"><use href="#extend"/></svg>延伸</button>
        <button class="tool"><svg class="ic"><use href="#trim"/></svg>修剪</button><i class="sep"></i>
        <button class="tool"><svg class="ic"><use href="#break"/></svg>打断</button>
        <button class="tool"><svg class="ic"><use href="#join"/></svg>合并</button>
        <button class="tool" disabled><svg class="ic"><use href="#split"/></svg>分割</button><i class="sep"></i>
        <button class="tool"><svg class="ic"><use href="#alignto"/></svg>对齐<i class="caret tight"></i></button>
        <button class="tool"><svg class="ic"><use href="#offset"/></svg>偏移</button>
        <button class="tool"><svg class="ic"><use href="#stretch"/></svg>拉伸</button><i class="sep"></i>
        <button class="tool" disabled><svg class="ic"><use href="#grip"/></svg>设置夹点</button>
      </div>
    </div>
    <div class="toolrow">
      <div class="strip fit">
        <i class="grip near"></i>
        <span class="combo short"><select aria-label="楼层"><option>基础层</option></select><i class="caret"></i></span>
        <span class="combo"><select aria-label="类别"><option>梁</option></select><i class="caret"></i></span>
        <span class="combo"><select aria-label="构件类型"><option>梁</option></select><i class="caret"></i></span>
        <span class="combo"><select aria-label="构件"><option>KL-10(7)</option></select><i class="caret"></i></span>
        <span class="combo"><select aria-label="分层"><option>分层1</option></select><i class="caret"></i></span>
        <i class="sep wide"></i>
        <button class="tool"><svg class="ic"><use href="#props"/></svg>属性</button>
        <button class="tool on"><svg class="ic"><use href="#pencil"/></svg>编辑钢筋</button>
        <button class="tool on"><svg class="ic"><use href="#list"/></svg>构件列表</button>
        <button class="tool"><svg class="ic"><use href="#pick"/></svg>拾取构件</button>
      </div>
      <div class="strip grow">
        <i class="grip near"></i>
        <button class="tool"><svg class="ic"><use href="#twopt"/></svg>两点</button>
        <button class="tool"><svg class="ic"><use href="#parallel"/></svg>平行</button>
        <button class="tool"><svg class="ic"><use href="#ptangle"/></svg>点角<i class="caret"></i></button>
        <button class="tool"><svg class="ic"><use href="#axis3"/></svg>三点辅轴<i class="caret"></i></button>
        <button class="tool"><svg class="ic"><use href="#erase"/></svg>删除辅轴</button>
        <svg class="more"><use href="#more"/></svg>
      </div>
    </div>
    <div class="toolrow">
      <div class="strip grow">
        <i class="grip"></i>
        <button class="tool on"><svg class="ic"><use href="#cursor"/></svg>选择</button><i class="caret"></i><i class="sep wide"></i>
        <button class="tool"><svg class="ic"><use href="#line"/></svg>直线</button>
        <button class="tool"><svg class="ic"><use href="#ptlen"/></svg>点加长度</button>
        <button class="tool"><svg class="ic"><use href="#arc"/></svg>三点画弧<i class="caret"></i></button>
        <span class="combo short"><select aria-label="画弧方式"><option></option></select><i class="caret"></i></span>
        <button class="tool"><svg class="ic"><use href="#rect"/></svg>矩形</button><i class="sep"></i>
        <button class="tool"><svg class="ic"><use href="#smart"/></svg>智能布置<i class="caret tight"></i></button><i class="sep"></i>
        <button class="tool"><svg class="ic"><use href="#beamedit"/></svg>修改梁段属性</button>
        <button class="tool"><svg class="ic"><use href="#mark"/></svg>原位标注<i class="caret"></i></button>
        <button class="tool"><svg class="ic"><use href="#respan"/></svg>重提梁跨<i class="caret"></i></button>
        <button class="tool"><svg class="ic"><use href="#brush"/></svg>梁跨数据复制<i class="caret"></i></button>
        <svg class="more"><use href="#more"/></svg>
      </div>
      <div class="strip stub"><i class="grip"></i></div>
    </div>

    <div class="canvas">
      <svg class="scene" role="img" aria-label="梁平面图">
        <defs><pattern id="hatch" width="16" height="16" patternUnits="userSpaceOnUse"><path d="M-1 16L16 -1M14 17L17 14M-1 0L0 -1" stroke="#b4b4b4" stroke-width="1"/></pattern></defs>
        <g transform="translate(-343 -168)">
          <rect x="993" y="168" width="189" height="257" fill="url(#hatch)"/>
          <path d="M343 169H438" stroke="#008000" stroke-width="2"/><path d="M438 169H749" stroke="#c0c0c0" stroke-width="2"/>
          <rect x="343" y="227" width="406" height="11" fill="#008000"/>
          <path d="M992.500 168V424.500H1182.500V168" fill="none" stroke="#fff"/>
          <path d="M1087 168V361M1101 425V449M1164 425V449" stroke="#fff" stroke-width="2"/>
          <path d="M1036 310L1087 361L1138 310" fill="none" stroke="#fff" stroke-width="1.500"/>
          <g fill="none" stroke="#008000"><path id="b" d="M432 168.500L441 171L445 181L441 190L432 194L423 190L419 181L423 171Z"/><use href="#b" x="374"/><use href="#b" x="562"/><use href="#b" x="749"/><use href="#b" x="-76" y="51"/><use href="#b" x="-76" y="245"/></g>
          <path d="M602 425.500H732A131 131 0 0 0 863 294" fill="none" stroke="#0080ff" stroke-width="11"/>
          <path d="M642 388V420" stroke="#fff" stroke-width="2"/><path d="M642 420V426" stroke="#ff8000" stroke-width="2"/>
          <g class="cadtext" fill="#e0e0e0"><text x="641" y="387" xml:space="preserve">KL-10(7)  200*400</text><text x="641" y="408" xml:space="preserve">A8@100/200(2)  3C14;3C14</text></g>
          <g class="axis" fill="#e8e8e8"><text x="432" y="187">4</text><text x="806" y="187">5</text><text x="994" y="187">6</text><text x="1182" y="187">7</text><text x="356" y="238" fill="#c8a0c8">0</text><text x="356" y="431">A1</text></g>
          <text class="note" x="544" y="286">这是需要连续绘制的</text>
          <path d="M589 433L602 412L615 433ZM851 302L863 281L875 302Z" fill="#ff0"/>
          <path d="M343 232.500H1400M343 294.500H1400M343 375.500H1400M343 415.500H1400M343 425.500H1400M431.500 168V425M438.500 168V425M602.500 168V425M721.500 168V425M749.500 168V425M777.500 168V425M806.500 168V425M834.500 168V425M862.500 168V425M891.500 168V425M970.500 168V425M993.500 168V425M1056.500 168V425M1079.500 168V425M1102.500 168V425M1164.500 168V425M1181.500 168V425M1187.500 168V425" stroke="#f00"/>
          <path d="M658 421H666V429H658ZM717 421H725V429H717ZM816 387H824V395H816Z" fill="#ff8000"/>
          <path d="M598 421H606V429H598ZM859 291H867V299H859Z" fill="#00f"/>
          <path d="M658 425.500H666M717 425.500H725M598 425.500H606M859 294.500H867M602.500 421V426M862.500 291V299" stroke="#4cf"/>
          <path d="M396 399V360H394L398 350L402 360H400V399Z" fill="#0f0"/><path d="M398 397H436V394L448 399L436 404V401H398Z" fill="#f00"/>
          <text class="ucs" x="407" y="362" fill="#0f0">Y</text><text class="ucs" x="435" y="389" fill="#f00">X</text>
        </g>
      </svg>
    </div>

    <div class="snapbar">
      <div class="strip fit">
        <i class="grip"></i>
        <button class="tool"><svg class="ic"><use href="#sx"/></svg>交点</button>
        <button class="tool on"><svg class="ic"><use href="#perp"/></svg>垂点</button>
        <button class="tool on"><svg class="ic"><use href="#mid"/></svg>中点</button>
        <button class="tool"><svg class="ic"><use href="#penta"/></svg>顶点</button>
        <button class="tool"><svg class="ic"><use href="#coord"/></svg>坐标</button>
      </div>
      <div class="strip fit">
        <i class="grip near"></i>
        <span class="combo short"><select aria-label="偏移方式"><option>不偏移</option></select><i class="caret"></i></span>
        <i class="sep thin"></i>
        <label class="num" for="ox">X=</label><span class="spin"><input id="ox" type="text" value="0"><span><i class="tup"></i><i class="tdn"></i></span></span><span class="unit">mm</span>
        <label class="num" for="oy">Y=</label><span class="spin"><input id="oy" type="text" value="0"><span><i class="tup"></i><i class="tdn"></i></span></span><span class="unit">mm</span>
        <i class="sep thin"></i>
        <input class="check" id="rot" type="checkbox"><label class="rotlab" for="rot">旋转</label>
        <span class="spin angle"><input type="text" value="0.000" aria-label="旋转角度"><span><i class="tup"></i><i class="tdn"></i></span></span><span class="unit">°</span>
      </div>
    </div>

    <section class="rebar-pane">
      <div class="splitter"><svg viewBox="0 0 11 11"><rect x=".5" y=".5" width="10" height="10" fill="#e9c9c9" stroke="#333"/><path d="M2 2L9 9M9 2L2 9" stroke="#722" stroke-width="1.500"/></svg></div>
      <div class="rebar-main">
        <div class="strip rebar-tools">
          <button class="tool" disabled aria-label="首行"><svg class="ic"><use href="#first"/></svg></button>
          <button class="tool" disabled aria-label="上一行"><svg class="ic"><use href="#prev"/></svg></button>
          <button class="tool" disabled aria-label="下一行"><svg class="ic"><use href="#next"/></svg></button>
          <button class="tool" disabled aria-label="末行"><svg class="ic"><use href="#last"/></svg></button><i class="sep"></i>
          <button class="tool" disabled aria-label="上移"><svg class="ic"><use href="#up"/></svg></button>
          <button class="tool" disabled aria-label="下移"><svg class="ic"><use href="#down"/></svg></button><i class="sep"></i>
          <button class="tool" disabled><svg class="ic"><use href="#insrow"/></svg>插入</button>
          <button class="tool" disabled><svg class="ic"><use href="#delrow"/></svg>删除</button>
          <button class="tool" disabled><svg class="ic"><use href="#scalebar"/></svg>缩尺配筋</button>
          <button class="tool" disabled><svg class="ic"><use href="#info"/></svg>钢筋信息</button>
          <button class="tool"><svg class="ic"><use href="#gallery"/></svg>钢筋图库</button>
          <button class="tool"><svg class="ic"><use href="#other"/></svg>其他<i class="caret tight"></i></button>
          <button class="tool">关闭</button><i class="sep lone"></i>
          <span>单构件钢筋总重(kg)：0</span>
        </div>
        <div class="sheet">
          <table>
            <colgroup><col class="w32"><col class="w73"><col class="w56"><col class="w36"><col class="w33"><col class="w201"><col class="w166"><col class="w156"><col class="w61"><col class="w38"><col class="w39"><col class="w49"><col class="w61"><col></colgroup>
            <thead><tr><th></th><th>筋号</th><th>直径(mm)</th><th>级别</th><th>图号</th><th>图形</th><th>计算公式</th><th>公式描述</th><th>长度(mm)</th><th class="hot">根数</th><th>搭接</th><th>损耗(%)</th><th>单重(kg)</th><th></th></tr></thead>
            <tbody><tr><th class="rowhead">1*</th><td class="edit"></td><td></td><td></td><td></td><td></td><td></td><td></td><td></td><td class="tint"></td><td></td><td></td><td></td><td></td></tr></tbody>
          </table>
          <div class="hbar"><svg class="sm"><use href="#aleft"/></svg><div class="track"><div class="thumb wide-thumb"></div></div><svg class="sm"><use href="#aright"/></svg></div>
        </div>
      </div>
    </section>
  </main>
</div>

<footer class="status"><span class="s1">X=270013 Y=5207</span><span class="s2">层高:2.15m</span><span class="s3">底标高:-2.2m</span><span class="s4">1(2)</span><span class="s5">按鼠标左键指定第一个角点，或拾取构件图元</span><span class="s6">32.3 FPS</span></footer>

<div class="taskbar">
  <button class="start" aria-label="开始"><svg viewBox="0 0 16 16"><path d="M0 2.500L7 1.500V7.500H0ZM8 1.400L16 0V7.500H8ZM0 8.500H7V14.500L0 13.500ZM8 8.500H16V16L8 14.600Z" fill="#fff"/></svg></button>
  <div class="cortana"><svg viewBox="0 0 22 22"><circle cx="11" cy="11" r="9" fill="none" stroke="#111" stroke-width="3"/></svg><input type="text" placeholder="在这里输入你要搜索的内容" aria-label="搜索"><svg class="mic" viewBox="0 0 14 18"><rect x="4.500" y="1" width="5" height="10" rx="2.500" fill="none" stroke="#222"/><path d="M2 8V11C2 14 12 14 12 11V8M7 13.500V17M4 17H10" fill="none" stroke="#222"/></svg></div>
  <div class="apps">
    <button aria-label="任务视图"><svg viewBox="0 0 24 24"><path d="M4 4V7H14V4M4 20V17H14V20M5 9.500H13V14.500H5ZM18.500 4V7M18.500 9V20" fill="none" stroke="#fff" stroke-width="1.500"/></svg></button>
    <button aria-label="浏览助手"><svg viewBox="0 0 24 24"><g fill="#e8eaeb"><path d="M11.500 11.500C4 12 1 9 3 5C5 1 11 1 11.500 5Z"/><path d="M12.500 11.500C12 4 15 1 19 3C23 5 23 11 19 11.500Z"/><path d="M12.500 12.500C20 12 23 15 21 19C19 23 13 23 12.500 19Z"/><path d="M11.500 12.500C12 20 9 23 5 21C1 19 1 13 5 12.500Z"/></g></svg></button>
    <button aria-label="浏览器"><svg viewBox="0 0 24 24"><path d="M20 16C17 22 6 21 5 13C5 5 18 3 20 12H6" fill="none" stroke="#e8eaeb" stroke-width="3.500"/><path d="M4 21C-1 16 10 2 21 3C23 4 21 7 20 8" fill="none" stroke="#e8eaeb" stroke-width="2"/></svg></button>
    <button aria-label="提醒"><svg viewBox="0 0 28 28"><circle cx="12" cy="15" r="9" fill="none" stroke="#b3b8ba" stroke-width="2"/><path d="M16 11C9 8 5 19 12 20C18 19 16 11 11 15M3 18C7 25 17 26 21 18" fill="none" stroke="#b3b8ba" stroke-width="2"/><path d="M14 12C17 9 14 2 20 1C26 2 23 9 26 12ZM18 13H22V15H18Z" fill="#e6a013"/></svg></button>
    <i class="tsep"></i>
    <button class="running" aria-label="加密锁"><svg viewBox="0 0 24 24"><path d="M3 7H12L15 10V22H3Z" fill="#e8e8e8"/><path d="M5 12H13M5 15H13M5 18H11" stroke="#333"/><path d="M11 5C11 0 20 0 19 6C19 9 15 9 15 13M15 15V18" fill="none" stroke="#ffe600" stroke-width="3"/></svg></button>
    <button class="running" aria-label="广联达"><svg viewBox="0 0 24 24"><use href="#logo"/></svg></button>
  </div>
  <div class="tscroll"><svg class="sm"><use href="#aup"/></svg><svg class="sm"><use href="#adown"/></svg></div>
  <div class="tray">
    <i class="tsep"></i><span class="links">链接</span>
    <svg class="people" viewBox="0 0 18 18"><circle cx="6" cy="8" r="2.500"/><path d="M1.500 16C2 10 10 10 10.500 16M12 7.500C9 6 10 1.500 12.500 1.500C15.500 1.500 16 6 13 7.500M11 9C14 7 16.500 9 16.500 12"/></svg>
    <svg class="chev" viewBox="0 0 18 18"><path d="M3 12L9 6L15 12"/></svg>
    <svg viewBox="0 0 18 18"><path d="M3 13C5 11 4 3 9 2.500C14 3 13 11 15 13ZM7 14H11V16H7Z" fill="#fff"/></svg>
    <svg viewBox="0 0 18 18"><path d="M7 5.500H16V13.500H6V11M2 3V8H6V3M4 8V12H7M3 1V3M5 1V3"/></svg>
    <svg viewBox="0 0 18 18"><path d="M2 15C3 9 8 4 15 3M5 16C6 11 10 7 15 6M8 16C9 13 12 10 15 10M11 16C12 14 13 13 15 13"/></svg>
    <svg viewBox="0 0 18 18"><path d="M1 7H3L7 3V15L3 11H1Z"/><circle cx="13" cy="13" r="4.500" fill="#d92835" stroke="none"/><path d="M11 11L15 15M15 11L11 15"/></svg>
    <svg class="kbd" viewBox="0 0 24 18"><path d="M1.500 3.500H22.500V15.500H1.500ZM6 12.500H18"/><path d="M4 6.500H21M4 9.500H21" stroke-dasharray="1.500 1.500"/></svg>
    <span class="ime">中</span>
    <svg viewBox="0 0 18 18"><path d="M2 3L16 1L17 15L3 17Z" fill="#f4501e" stroke="none"/><path d="M13 5C9 3 5 5 6 8C8 10 13 8 13 11C12 14 8 14 5 13" stroke-width="2"/></svg>
    <time>15:56<br>2018/8/30</time>
    <svg class="action" viewBox="0 0 18 18"><path d="M1.500 2.500H16.500V13.500H12V17L8.500 13.500H1.500Z"/></svg>
  </div>
</div>

<div class="speedball">
  <svg viewBox="0 0 50 50" class="ball"><circle cx="25" cy="25" r="24" fill="#e9eceb" stroke="#a6aaa8"/><circle cx="25" cy="25" r="22" fill="#158055"/><path d="M6 14H44A22 22 0 1 1 6 14Z" fill="url(#gGreen)"/><ellipse cx="25" cy="8" rx="9" ry="3" fill="#5ab58b"/><text x="25" y="29">73%</text></svg>
  <div class="rates"><span><i class="ul">↑</i>0K/s</span><span><i class="dl">↓</i>0K/s</span></div>
  <svg viewBox="0 0 20 20" class="plus"><circle cx="9" cy="11" r="8" fill="#3c7cd8"/><path d="M9 7V15M5 11H13" stroke="#fff" stroke-width="2"/><circle cx="15" cy="5" r="4" fill="#e02f2f"/></svg>
</div>
</body>
</html>
```
FILE: styles.css
```css
* { box-sizing: border-box; }
html, body { height: 100%; }
body {
  margin: 0;
  display: flex;
  flex-direction: column;
  overflow: hidden;
  position: relative;
  background: #f0f0f0;
  color: #000;
  font: 12px/16px "Noto Sans", "Noto Sans CJK SC", sans-serif;
}
button, input, select { font: inherit; color: inherit; }
button { border: 0; background: none; padding: 0; white-space: nowrap; }
ul { list-style: none; margin: 0; padding: 0; }
h1, h2 { margin: 0; font: inherit; }
i { font-style: normal; }
.defs { position: absolute; width: 0; height: 0; }
.ic { width: 16px; height: 16px; flex: none; }
.sm { width: 10px; height: 10px; flex: none; }

/* title and menus */
.titlebar { display: flex; align-items: center; height: 23px; flex: none; background: #fff; padding-left: 2px; gap: 4px; color: #8c8c8c; white-space: nowrap; }
.titlebar h1 { flex: 1; overflow: hidden; font-size: 13px; }
.titlebar h1 span { font-size: 12px; }
.winbtns { display: flex; }
.winbtns button { width: 46px; height: 22px; }
.winbtns svg { width: 12px; height: 12px; }
.menubar { display: grid; grid-template-columns: 933px 187px 1fr; gap: 4px; height: 30px; flex: none; }
.menus { display: flex; align-items: center; gap: 11px; padding-left: 7px; white-space: nowrap; }
.menus .tool { margin: 0 0 0 -2px; }
.strip { display: flex; align-items: center; min-width: 0; background: linear-gradient(#fafafa, #f1f1f1); white-space: nowrap; overflow: hidden; }
.strip.notice { justify-content: center; color: #6b3300; margin: 1px 0; }
.account { padding-left: 3px; margin-top: 1px; }
.account .bell { margin-left: 2px; }
.more { width: 10px; height: 10px; flex: none; align-self: flex-start; margin: 3px 3px 0 auto; }
.mainbar { display: grid; grid-template-columns: 148px 549px 1fr; gap: 4px; height: 30px; flex: none; padding: 1px 0; }
.mainbar .strip { padding-left: 5px; }
.mainbar .files .more { margin-right: 0; }
.mainbar .view { padding-left: 0; }
.mainbar .dim2 { background: #fff; padding-left: 2px; margin-right: 4px; }
.mainbar .lone { margin-right: 2px; margin-left: -3px; }
.sigma { width: 16px; text-align: center; font: bold 14px/16px "DejaVu Sans", sans-serif; }

/* tool buttons */
.tool { display: inline-flex; align-items: center; flex: none; gap: 4px; height: 25px; margin-right: 7px; }
.tool:disabled { color: #8b8b8b; }
.tool.on { border: 1px solid #0078d7; background: #dbe9f5; padding: 0 2px; margin: 0 3px 0 -3px; }
.on + .on { margin-left: -3px; }
.caret { width: 9px; height: 16px; flex: none; display: inline-flex; align-items: center; justify-content: center; }
.caret::before { content: ""; border: 3px solid transparent; border-top-color: #000; border-bottom: 0; }
.caret.tight { margin-left: -4px; }
.sep { width: 1px; height: 16px; flex: none; background: #bdbdbd; margin-right: 5px; }
.sep.wide { margin: 0 4px 0 3px; }
.sep.thin { margin: 0 2px; }
.grip { width: 3px; height: 16px; flex: none; margin: 0 8px 0 3px; background: repeating-linear-gradient(#bbb 0 2px, transparent 2px 4px); }
.combo { display: flex; align-items: center; width: 70px; height: 22px; flex: none; margin-right: 2px; background: #fff; }
.combo select { flex: 1; min-width: 0; border: 0; padding: 0 0 0 2px; background: transparent; appearance: none; }
.combo .caret { width: 13px; height: 22px; background: #f6f6f6; }
.combo.short { width: 58px; }

/* layout */
.workspace { flex: 1; min-height: 0; display: grid; grid-template-columns: 165px 170px 1fr; gap: 4px; column-gap: 4px; }
.panel { display: flex; flex-direction: column; min-height: 0; min-width: 0; padding: 1px 0 2px; }
.panel, .status, .sheet, .comp-search { font-family: "Liberation Serif", "Noto Sans CJK SC", serif; }
.panel-head { display: flex; align-items: center; gap: 8px; height: 15px; flex: none; border: 1px solid #666; padding-right: 4px; font-size: 13px; line-height: 13px; }
.panel-head span { flex: 1; }
.section-btn { height: 22px; flex: none; border: 1px solid #a0a0a0; background: #efefef; box-shadow: inset 1px 1px #fff; }
.modules .panel-head { margin-bottom: 1px; }
.module-box { flex: 1; min-height: 0; display: flex; flex-direction: column; border: 1px solid #a0a0a0; padding: 0 1px 1px; }
.expanders { height: 28px; flex: none; display: flex; align-items: center; gap: 4px; padding-left: 4px; background: linear-gradient(#fdfdfd, #f0f0f0); }
.expanders svg { width: 18px; height: 14px; }
.scroller { flex: 1; min-height: 0; display: flex; border: 1px solid #828790; border-width: 1px 1px 0; background: #fff; }
.tree { flex: 1; min-width: 0; overflow: hidden; }
.tree li { height: 16px; display: flex; align-items: center; white-space: nowrap; }
.tree span { line-height: 16px; }
.leaf::before { content: ""; width: 43px; height: 16px; flex: none; background: repeating-linear-gradient(#888 0 1px, transparent 1px 2px) 12px 0 / 1px 16px no-repeat, repeating-linear-gradient(#888 0 1px, transparent 1px 2px) 31px 0 / 1px 16px no-repeat, repeating-linear-gradient(90deg, #888 0 1px, transparent 1px 2px) 31px 8px / 11px 1px no-repeat; }
.leaf.end::before { background-size: 1px 16px, 1px 8px, 11px 1px; }
.leaf .ic { margin-right: 2px; }
.leaf span { padding: 0 4px 0 2px; }
.current .ic, .current span { background-color: #d9d9d9; }
.leaf.current .ic { width: 18px; margin-right: 0; }
.node { padding-left: 6px; }
.node .sm { margin-right: 7px; }
.node .ic { margin-right: 5px; }
.shut .sm { opacity: .6; }
.vbar { width: 17px; flex: none; display: flex; flex-direction: column; align-items: center; background: #f0f0f0; padding: 4px 1px; }
.track { flex: 1; align-self: stretch; min-width: 0; }
.thumb { background: #cdcdcd; }
.module-thumb { background: #a6a6a6; height: 65%; margin-top: 92px; }
.comp-thumb { height: 42%; }
.hbar { height: 17px; flex: none; display: flex; align-items: center; background: #f0f0f0; padding: 0 4px; gap: 3px; }
.hbar .thumb { height: 15px; }
.module-hbar { border: 1px solid #828790; border-top: 0; padding-right: 20px; }
.module-hbar .thumb { width: 94%; }

.comp-tools { height: 28px; flex: none; display: flex; align-items: center; padding-left: 5px; font-family: "Noto Sans", "Noto Sans CJK SC", sans-serif; }
.comp-search { height: 26px; flex: none; display: flex; padding: 1px 1px; }
.comp-search input { width: 144px; border: 1px solid #7a7a7a; background: #fff; padding: 0 2px; }
.comp-search button { flex: 1; }
.comp-search .ic { display: block; margin: auto; }
.comp-box { flex: 1; min-height: 0; display: flex; border: 1px solid #828790; background: #fff; margin-top: -1px; }
.comp-tree { flex: 1; min-width: 0; overflow: hidden; padding-top: 2px; }
.comp-tree li { height: 16px; display: flex; align-items: center; white-space: nowrap; }
.comp-tree li:not(.root)::before { content: ""; width: 41px; height: 16px; flex: none; background: repeating-linear-gradient(#888 0 1px, transparent 1px 2px) 32px 0 / 1px 16px no-repeat, repeating-linear-gradient(90deg, #888 0 1px, transparent 1px 2px) 32px 8px / 10px 1px no-repeat; }
.gear { width: 20px; height: 12px; flex: none; }
.comp-tree span { padding: 0 5px 0 2px; line-height: 16px; }
.root { padding-left: 7px; gap: 7px; }
.root span { padding: 0; }
.root .ic { margin-right: -3px; }
.picked .gear { height: 16px; padding: 2px 0; }
.picked .gear, .picked span { background: #316ac5; }

.drawing { display: flex; flex-direction: column; min-width: 0; min-height: 0; }
.toolrow { display: flex; gap: 4px; height: 28px; flex: none; }
.toolrow .strip { margin: 1px 0; }
.fit { flex: none; }
.grow { flex: 1; }
.toolrow .grip { margin-right: 6px; }
.toolrow .grip.near { margin-right: 3px; }
.stub { width: 32px; flex: none; }
.canvas { flex: 283 1 0; min-height: 0; margin-top: 1px; background: #000; overflow: hidden; }
.scene { display: block; width: 100%; height: 100%; }
.cadtext { font: 17px "Liberation Mono", monospace; }
.axis { font: 16px "Liberation Sans", sans-serif; text-anchor: middle; }
.note { font: 600 22px "Liberation Serif", "Noto Sans CJK SC", serif; fill: #f00; }
.ucs { font: 13px "Liberation Sans", sans-serif; }

.snapbar { display: flex; gap: 4px; height: 33px; flex: none; align-items: center; padding-left: 212px; }
.snapbar .strip { height: 29px; }
.snapbar .grip { margin-right: 4px; }
.snapbar .grip.near { margin: 0 2px; }
.num, .unit { color: #7b7b7b; }
.num { width: 19px; }
.unit { margin: 0 4px 0 3px; }
.spin { display: flex; width: 58px; height: 23px; border: 1px solid #7a7a7a; background: #f0f0f0; color: #7b7b7b; }
.spin.angle { width: 68px; }
.spin input { flex: 1; min-width: 0; width: 0; border: 0; padding: 0 4px 0 0; text-align: right; background: none; }
.spin span { width: 14px; display: flex; flex-direction: column; justify-content: space-around; align-items: center; }
.tup, .tdn { border: 3px solid transparent; border-bottom-color: #555; border-top: 0; }
.tdn { border-top: 3px solid #555; border-bottom: 0; }
.check { appearance: none; width: 11px; height: 11px; margin: 0 7px 0 0; border: 1px solid #999; background: #f5f5f5; }
.rotlab { margin-right: 5px; }

.rebar-pane { flex: 224 1 0; min-height: 0; display: flex; padding: 1px 2px 2px 0; }
.splitter { width: 13px; flex: none; background: radial-gradient(#bbb 1px, transparent 1px) 1px 0 / 5px 5px; background-clip: content-box; padding: 0 2px 0 1px; }
.splitter svg { display: block; width: 11px; height: 11px; }
.rebar-main { flex: 1; min-width: 0; display: flex; flex-direction: column; }
.rebar-tools { height: 27px; flex: none; padding-left: 3px; }
.rebar-tools [aria-label] { margin-right: 8px; }
.rebar-tools .sep { margin-left: -3px; }
.rebar-tools .sep.lone { margin-left: 0; }
.sheet { flex: 1; min-height: 0; display: flex; flex-direction: column; justify-content: space-between; background: #fff; border: 1px solid #a0a0a0; border-top-width: 2px; }
.sheet table { width: 100%; table-layout: fixed; border-collapse: collapse; }
.sheet th, .sheet td { height: 19px; padding: 0; border: 1px solid #c0c0c0; border-width: 0 1px 1px 0; font-weight: normal; line-height: 18px; white-space: nowrap; overflow: hidden; }
.sheet thead th { background: linear-gradient(#fff, #f0f0f0); }
.sheet thead .hot { background: linear-gradient(#fbdba6, #f3bd5c); color: #5b0040; }
.sheet .rowhead { background: #ffd48c; color: #5b0040; }
.sheet .tint { background: #d8e9f8; }
.sheet .edit { border-right-color: #000; }
.w32 { width: 32px; } .w73 { width: 73px; } .w56 { width: 56px; } .w36 { width: 36px; } .w33 { width: 33px; }
.w201 { width: 201px; } .w166 { width: 166px; } .w156 { width: 156px; } .w61 { width: 61px; } .w38 { width: 38px; }
.w39 { width: 39px; } .w49 { width: 49px; }
.wide-thumb { width: 61%; }

.status { display: flex; gap: 2px; height: 21px; flex: none; padding-bottom: 1px; white-space: nowrap; }
.status span { border: 1px solid #d5d5d5; background: linear-gradient(#fcfcfc, #f0f0f0); padding-left: 1px; line-height: 20px; overflow: hidden; }
.s1 { width: 148px; } .s2 { width: 78px; } .s3 { width: 98px; } .s4 { width: 48px; } .s5 { flex: 1; } .s6 { width: 70px; }

.taskbar { display: flex; height: 40px; flex: none; background: #04161c; color: #fff; }
.start { width: 48px; background: #05090b; }
.start svg { width: 16px; height: 16px; }
.cortana { width: 344px; flex: none; display: flex; align-items: center; background: #f2f2f2; padding: 0 13px 0 9px; }
.cortana svg { width: 22px; height: 22px; }
.cortana .mic { width: 14px; height: 18px; }
.cortana input { flex: 1; min-width: 0; border: 0; background: none; font-size: 14px; padding: 0 0 0 9px; }
.cortana input::placeholder { color: #333; opacity: 1; }
.apps { flex: 1; display: flex; align-items: center; }
.apps button { width: 50px; height: 40px; border-bottom: 2px solid transparent; }
.apps .running { width: 40px; margin: 0 4px 0 5px; border-color: #76b9ed; }
.apps svg { width: 25px; height: 25px; display: block; margin: auto; }
.tsep { width: 4px; height: 18px; margin: 0 8px; border: 1px solid #44525a; border-width: 0 1px; }
.tscroll { width: 17px; display: flex; flex-direction: column; justify-content: space-between; align-items: center; background: #f0f0f0; padding: 4px 0; }
.tray { width: 466px; display: flex; align-items: center; padding-left: 5px; }
.tray svg { width: 18px; height: 18px; flex: none; margin-right: 6px; fill: none; stroke: #fff; }
.links { margin: 0 22px 0 1px; }
.tray .people { margin-right: 18px; }
.tray .chev { margin-right: 30px; }
.tray .kbd { width: 24px; margin-right: 10px; }
.ime { margin-right: 13px; }
.tray time { width: 70px; text-align: center; font-size: 12px; line-height: 19px; margin: 0 20px 0 5px; }
.tray .action { margin-right: 0; }

/* floating network monitor */
.speedball { position: absolute; left: 221px; top: 19px; display: flex; align-items: center; height: 50px; }
.speedball::before { content: ""; position: absolute; left: 20px; right: 0; top: 6px; height: 40px; border: 1px solid #ccc; border-radius: 20px; background: linear-gradient(#f8f8f8, #dedede); box-shadow: 0 2px 6px #888; }
.ball, .rates, .plus { position: relative; }
.ball { width: 50px; height: 50px; }
.ball text { font: 15px "Noto Sans", sans-serif; fill: #fff; text-anchor: middle; }
.rates { width: 48px; font-size: 10px; line-height: 15px; }
.rates span { display: flex; justify-content: space-between; }
.ul { color: #e4573d; font-weight: bold; }
.dl { color: #269a57; font-weight: bold; }
.plus { width: 20px; height: 20px; margin: 0 5px 0 4px; }
```
